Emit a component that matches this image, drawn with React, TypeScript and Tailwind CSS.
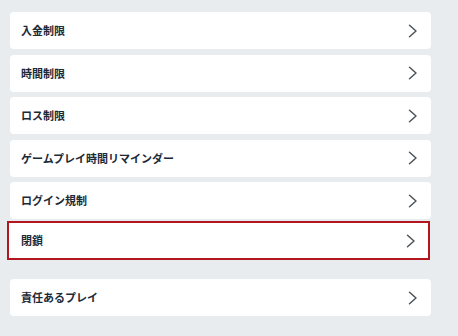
import { ChevronRight } from "lucide-react";

const items = ["入金制限", "時間制限", "ロス制限", "ゲームプレイ時間リマインダー", "ログイン規制"];

function Row({ label, className = "" }: { label: string; className?: string }) {
  return (
    <div className={`flex items-center justify-between bg-white rounded-[4px] h-[37px] ${className}`}>
      <span className="text-[11px] font-bold text-[#1c2a38] leading-none">{label}</span>
      <svg width="10" height="14" viewBox="0 0 10 14" fill="none" className="shrink-0">
        <path d="M1.5 1.2 L8 7 L1.5 12.8" stroke="#4d5358" strokeWidth="1.5" strokeLinecap="round" strokeLinejoin="round" />
      </svg>
    </div>
  );
}

export default function App() {
  return (
    <div
      className="w-[458px] h-[336px] bg-[#e9ecef] pt-[12px] overflow-hidden"
      style={{ fontFamily: '"Noto Sans CJK JP", "Noto Sans", sans-serif' }}
    >
      <div className="flex flex-col gap-[5.5px] ml-[10px] w-[421px]">
        {items.map((label) => (
          <Row key={label} label={label} className="pl-[11px] pr-[13px]" />
        ))}
      </div>
      <div className="mt-[2px] ml-[7px] w-[423px] h-[39px] border-2 border-[#b3161e] bg-white flex items-center justify-between pl-[12px] pr-[12px]">
        <span className="text-[11px] font-bold text-[#1c2a38] leading-none">閉鎖</span>
        <svg width="10" height="14" viewBox="0 0 10 14" fill="none" className="shrink-0">
          <path d="M1.5 1.2 L8 7 L1.5 12.8" stroke="#4d5358" strokeWidth="1.5" strokeLinecap="round" strokeLinejoin="round" />
        </svg>
      </div>
      <div className="mt-[19px] ml-[10px] w-[421px]">
        <Row label="責任あるプレイ" className="pl-[11px] pr-[13px]" />
      </div>
    </div>
  );
}
